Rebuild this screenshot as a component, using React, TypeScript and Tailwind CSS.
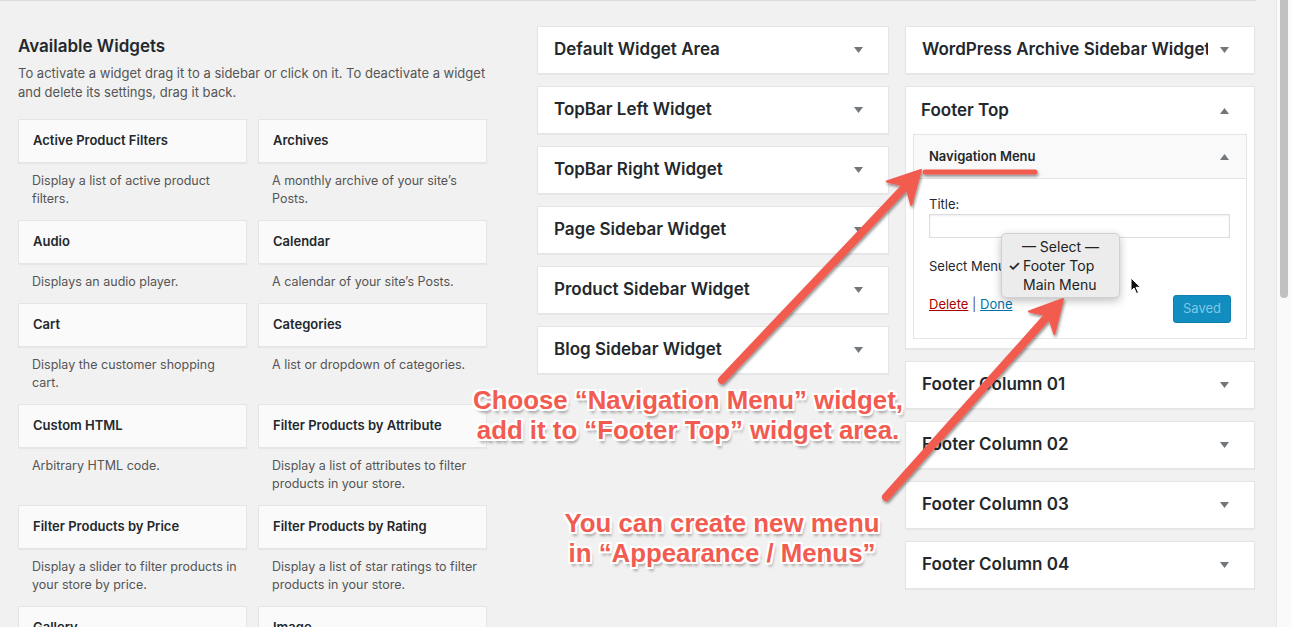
import React from "react";

const widgets: Array<{ title: string; desc: string[] }> = [
  { title: "Active Product Filters", desc: ["Display a list of active product", "filters."] },
  { title: "Archives", desc: ["A monthly archive of your site’s", "Posts."] },
  { title: "Audio", desc: ["Displays an audio player."] },
  { title: "Calendar", desc: ["A calendar of your site’s Posts."] },
  { title: "Cart", desc: ["Display the customer shopping", "cart."] },
  { title: "Categories", desc: ["A list or dropdown of categories."] },
  { title: "Custom HTML", desc: ["Arbitrary HTML code."] },
  { title: "Filter Products by Attribute", desc: ["Display a list of attributes to filter", "products in your store."] },
  { title: "Filter Products by Price", desc: ["Display a slider to filter products in", "your store by price."] },
  { title: "Filter Products by Rating", desc: ["Display a list of star ratings to filter", "products in your store."] },
  { title: "Gallery", desc: ["Displays an image gallery."] },
  { title: "Image", desc: ["Displays an image."] },
];

const middleAreas = [
  "Default Widget Area",
  "TopBar Left Widget",
  "TopBar Right Widget",
  "Page Sidebar Widget",
  "Product Sidebar Widget",
  "Blog Sidebar Widget",
];

const footerColumns = ["Footer Column 01", "Footer Column 02", "Footer Column 03", "Footer Column 04"];

function Caret({ up = false }: { up?: boolean }) {
  return (
    <svg width="9" height="6" viewBox="0 0 9 6" className="shrink-0">
      {up ? <path d="M0 6 L4.5 0 L9 6 Z" fill="#72777c" /> : <path d="M0 0 L9 0 L4.5 6 Z" fill="#72777c" />}
    </svg>
  );
}

function SidebarBox({ title, clip = false }: { title: string; clip?: boolean }) {
  return (
    <div className="h-[48px] bg-white border border-[#e5e5e5] shadow-[0_1px_1px_rgba(0,0,0,0.04)] flex items-center justify-between pl-[16px] pr-[25px]">
      <span className={`text-[17px] font-semibold text-[#23282d] whitespace-nowrap overflow-hidden ${clip ? "w-[286px]" : ""}`}>
        {title}
      </span>
      <Caret />
    </div>
  );
}

function AvailableWidget({ title, desc }: { title: string; desc: string[] }) {
  return (
    <div>
      <div className="h-[44px] bg-[#fafafa] border border-[#e5e5e5] shadow-[0_1px_1px_rgba(0,0,0,0.04)] flex items-center px-[14px]">
        <span className="text-[13px] font-semibold text-[#23282d]">{title}</span>
      </div>
      <div className="pl-[14px] pt-[9px] pb-[12px] text-[12.5px] leading-[18px] text-[#555]">
        {desc.map((line) => (
          <div key={line}>{line}</div>
        ))}
      </div>
    </div>
  );
}

const noteText =
  "font-['Liberation_Sans',Arial,sans-serif] font-bold text-[25.8px] leading-[30px] text-[#f25b50] [text-shadow:2px_0_0_#fff,-2px_0_0_#fff,0_2px_0_#fff,0_-2px_0_#fff,2px_2px_0_#fff,-2px_2px_0_#fff,2px_-2px_0_#fff,-2px_-2px_0_#fff,2px_4px_3px_rgba(0,0,0,0.35)]";

export default function App() {
  return (
    <div className="relative flex h-[627px] w-[1291px] overflow-hidden bg-[#f1f1f1] font-[Inter,sans-serif]">
      <div className="flex-1 flex flex-col">
        {/* top edge of the header box */}
        <div className="h-[3px] w-[1256px] bg-[#f8f8f8] border-b border-[#dadada]" />

        <div className="flex pl-[18px] pt-[25px]">
          {/* Available widgets */}
          <div className="w-[469px]">
            <h2 className="mt-[10px] text-[17px] leading-[20px] font-semibold text-[#23282d]">Available Widgets</h2>
            <p className="mt-[8px] text-[13px] leading-[19px] text-[#555]">
              To activate a widget drag it to a sidebar or click on it. To deactivate a widget
              <br />
              and delete its settings, drag it back.
            </p>
            <div className="mt-[17px] grid grid-cols-2 gap-x-[11px]">
              {widgets.map((w) => (
                <AvailableWidget key={w.title} title={w.title} desc={w.desc} />
              ))}
            </div>
          </div>

          {/* Middle sidebars */}
          <div className="ml-[50px] w-[352px] flex flex-col gap-[12px]">
            {middleAreas.map((a) => (
              <SidebarBox key={a} title={a} />
            ))}
          </div>

          {/* Right sidebars */}
          <div className="ml-[16px] w-[350px] flex flex-col gap-[12px]">
            <SidebarBox title="WordPress Archive Sidebar Widget" clip />

            <div className="bg-white border border-[#e5e5e5] shadow-[0_1px_1px_rgba(0,0,0,0.04)] pb-[9px]">
              <div className="h-[47px] flex items-center justify-between pl-[15px] pr-[25px]">
                <span className="text-[17px] font-semibold text-[#23282d]">Footer Top</span>
                <Caret up />
              </div>
              <div className="mx-[7px] border border-[#e5e5e5] bg-white">
                <div className="h-[44px] bg-[#f9f9f9] border-b border-[#e5e5e5] flex items-center justify-between pl-[15px] pr-[17px]">
                  <span className="text-[13px] font-semibold text-[#23282d]">Navigation Menu</span>
                  <Caret up />
                </div>
                <div className="px-[15px] pt-[16px] pb-[15px] text-[13px] text-[#23282d]">
                  <div className="leading-[18px]">Title:</div>
                  <div className="mt-[1px] h-[24px] w-[301px] border border-[#ddd] bg-white shadow-[inset_0_1px_2px_rgba(0,0,0,0.07)]" />
                  <div className="mt-[19px] leading-[18px]">Select Menu:</div>
                  <div className="mt-[20px] flex items-start justify-between">
                    <div className="leading-[18px]">
                      <span className="text-[#a00] underline">Delete</span>
                      <span className="text-[#555]"> | </span>
                      <span className="text-[#0073aa] underline">Done</span>
                    </div>
                    <button className="h-[28px] w-[58px] rounded-[3px] bg-[#128dc0] border border-[#0f7fae] text-[13px] text-[#7fc7e6]">
                      Saved
                    </button>
                  </div>
                </div>
              </div>
            </div>

            {footerColumns.map((c) => (
              <SidebarBox key={c} title={c} />
            ))}
          </div>
        </div>
      </div>

      {/* scrollbar */}
      <div className="ml-[20px] w-[15px] bg-[#fafafa] border-l border-[#e8e8e8] pl-[3px]">
        <div className="h-[298px] w-[8px] rounded-b-[4px] bg-[#c1c1c1]" />
      </div>

      {/* select dropdown popup */}
      <div className="absolute left-[1001px] top-[233px] w-[119px] h-[65px] rounded-[5px] bg-[#ececec] border border-[#d0d0d0] shadow-[0_3px_8px_rgba(0,0,0,0.25)] pt-[3px] text-[14px] leading-[19px] text-[#222]">
        <div className="text-center">— Select —</div>
        <div className="relative pl-[21px]">
          <span className="absolute left-[6px] font-semibold">✓</span>Footer Top
        </div>
        <div className="pl-[21px]">Main Menu</div>
      </div>

      {/* mouse cursor */}
      <svg className="absolute left-[1130px] top-[277px]" width="12" height="18" viewBox="0 0 12 18">
        <path d="M1 1 L1 14 L4 11 L6.5 16.5 L8.5 15.6 L6 10.3 L10.5 10.3 Z" fill="#111" stroke="#fff" strokeWidth="1" strokeLinejoin="round" />
      </svg>

      {/* annotation arrows */}
      <svg className="absolute inset-0 pointer-events-none" width="1291" height="627" viewBox="0 0 1291 627">
        <defs>
          <filter id="sh" x="-20%" y="-20%" width="140%" height="140%">
            <feDropShadow dx="1" dy="2" stdDeviation="1.5" floodColor="#000" floodOpacity="0.45" />
          </filter>
        </defs>
        <g filter="url(#sh)" fill="#f25b50" stroke="#f25b50">
          <line x1="722" y1="380" x2="904" y2="188" strokeWidth="8" strokeLinecap="round" />
          <path d="M921 170 L911.3 204.9 L905.9 186 L886.7 181.5 Z" strokeWidth="2" strokeLinejoin="round" />
          <line x1="886" y1="497" x2="1047" y2="317" strokeWidth="8" strokeLinecap="round" />
          <path d="M1063 299 L1054.4 334.1 L1048.3 315.4 L1029 311.5 Z" strokeWidth="2" strokeLinejoin="round" />
          <line x1="925" y1="172" x2="1035" y2="172" strokeWidth="5" strokeLinecap="round" />
        </g>
      </svg>

      {/* annotation texts */}
      <div className={`absolute left-[438px] top-[385px] w-[500px] text-center ${noteText}`}>
        <div>Choose “Navigation Menu” widget,</div>
        <div>add it to “Footer Top” widget area.</div>
      </div>
      <div className={`absolute left-[522px] top-[508px] w-[400px] text-center ${noteText}`}>
        <div>You can create new menu</div>
        <div>in “Appearance / Menus”</div>
      </div>
    </div>
  );
}
